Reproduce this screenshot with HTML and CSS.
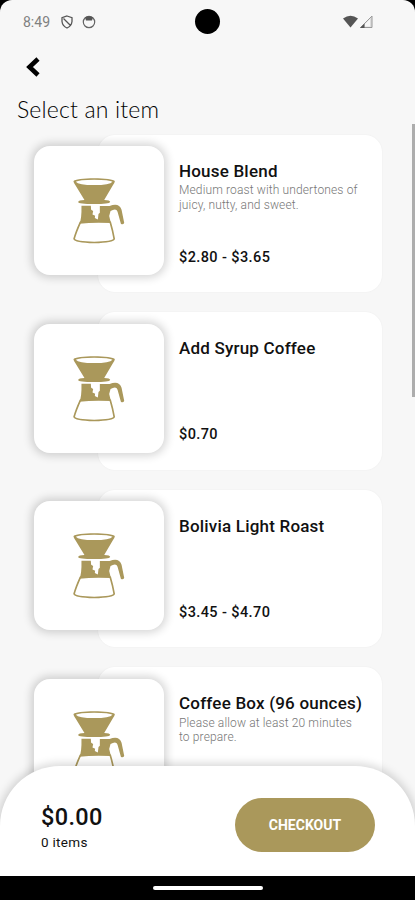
FILE: index.html
```html
<!DOCTYPE html>
<html lang="en">
<head>
<meta charset="utf-8">
<meta name="viewport" content="width=device-width">
<title>Select an item</title>
<link rel="stylesheet" href="styles.css">
</head>
<body>
<svg class="defs" width="0" height="0" aria-hidden="true">
  <symbol id="brewer" viewBox="36 36 158 202">
    <g fill="none" stroke="#aa985b" stroke-width="5" stroke-linecap="round" stroke-linejoin="round">
      <path d="M61 171Q47 202 42 221Q45 231 102 232Q159 231 162 221Q158 198 150 171"/>
    </g>
    <path fill="#aa985b" fill-rule="evenodd" d="M40 49C44 37 160 37 164 49Q163 55 158 61L132 105Q150 105 150 111Q148 117 102 117Q55 117 54 111Q55 105 73 105L46 61Q41 55 40 49ZM47 50Q55 60 102 60Q149 60 157 50Q148 44 102 44Q56 44 47 50Z"/>
    <path fill="#aa985b" d="M64 122H92L93 134L99 138L97 148L105 152L104 159L113 163L115 147L119 143V123L148 123Q176 111 184 134L192 174Q188 180 182 176L172 140Q168 128 151 138L147 153L152 174Q102 171 58 176Q65 160 64 122Z"/>
  </symbol>
</svg>
<div class="phone">
  <header class="status">
    <span class="time">8:49</span>
    <svg class="shield" viewBox="0 0 12 14"><path d="M6 1L11 2.7V6.5Q10.5 11 6 13Q1.500 11 1 6.500V2.700ZM2.500 3.500L9.500 10.500"/></svg>
    <svg class="badge" viewBox="0 0 14 14"><circle cx="7" cy="7" r="5.700"/><path d="M3 2.500L4 5.500H10L11 2.500Q7 0 3 2.500Z"/></svg>
    <span class="camera"></span>
    <svg class="signals" viewBox="0 0 31 14">
      <path fill="#555" d="M0 3.500Q7.500-2 15 3.500L7.500 12.500Z"/>
      <path fill="#ddd" d="M17 13L29 1V13Z"/><path fill="#f7f7f7" d="M22 11.500V9L27 4V11.500Z"/>
      <path fill="none" stroke="#999" d="M17.500 12.500L29 1V12.500Z"/><path fill="#555" d="M17 13L21.500 8.500V13Z"/>
    </svg>
  </header>
  <nav><svg class="back" viewBox="0 0 14 20"><path d="M12 2L3.500 10L12 18"/></svg></nav>
  <h1>Select an item</h1>
  <main>
    <article>
      <div class="tile"><svg><use href="#brewer"/></svg></div>
      <div class="info"><h2>House Blend</h2><p>Medium roast with undertones of<br>juicy, nutty, and sweet.</p><span class="price">$2.80 - $3.65</span></div>
    </article>
    <article>
      <div class="tile"><svg><use href="#brewer"/></svg></div>
      <div class="info"><h2>Add Syrup Coffee</h2><span class="price">$0.70</span></div>
    </article>
    <article>
      <div class="tile"><svg><use href="#brewer"/></svg></div>
      <div class="info"><h2>Bolivia Light Roast</h2><span class="price">$3.45 - $4.70</span></div>
    </article>
    <article>
      <div class="tile"><svg><use href="#brewer"/></svg></div>
      <div class="info"><h2>Coffee Box (96 ounces)</h2><p>Please allow at least 20 minutes<br>to prepare.</p></div>
    </article>
  </main>
  <span class="scrollbar"></span>
  <footer>
    <section class="cart">
      <div><strong>$0.00</strong><span class="count">0 items</span></div>
      <button>CHECKOUT</button>
    </section>
    <div class="gesture"><span></span></div>
  </footer>
</div>
</body>
</html>
```
FILE: styles.css
```css
* { box-sizing: border-box; }
body { margin: 0; background: #000; font-family: Roboto, sans-serif; color: #111; }
h1, h2, p { margin: 0; }
svg { display: block; }
.defs { position: absolute; }
.phone {
  position: relative;
  height: 900px;
  overflow: hidden;
  background: #f7f7f7;
  border-radius: 12px 12px 0 0;
}
.status { position: relative; display: flex; align-items: center; height: 43px; padding-left: 23px; }
.time { width: 38px; font-size: 14px; color: #808080; }
.shield { width: 12px; height: 14px; fill: none; stroke: #555; stroke-width: 1.300; }
.badge { width: 14px; height: 14px; margin-left: 9px; fill: none; stroke: #666; stroke-width: 1.200; }
.badge path { fill: #555; stroke: none; }
.camera { position: absolute; left: 195px; top: 9px; width: 25px; height: 25px; border-radius: 50%; background: #000; }
.signals { width: 31px; height: 14px; margin-left: auto; margin-right: 41px; }
nav { height: 51px; padding: 13.500px 0 0 26px; }
.back { width: 14px; height: 20px; fill: none; stroke: #000; stroke-width: 4.600; }
h1 { height: 40.500px; padding-left: 17px; font: 300 23px/30px Lato, sans-serif; letter-spacing: .18px; color: #000; white-space: nowrap; }
main { display: flex; flex-direction: column; gap: 20px; padding-left: 34px; }
article { display: flex; align-items: flex-start; height: 157.500px; }
.tile {
  position: relative;
  z-index: 1;
  flex: none;
  width: 129.500px;
  height: 129px;
  margin-top: 11.500px;
  padding: 31px 0 0 38px;
  border-radius: 16px;
  background: #fff;
  box-shadow: 0 0 8px 3px rgba(0, 0, 0, .16);
}
.tile svg { width: 53px; height: 67.500px; }
.info {
  display: flex;
  flex-direction: column;
  width: 284px;
  height: 100%;
  margin-left: -65.500px;
  padding: 26px 0 26.500px 81px;
  border-radius: 17px;
  background: #fff;
  box-shadow: 0 0 2px rgba(0, 0, 0, .05);
  white-space: nowrap;
}
h2 { font-size: 17px; line-height: 21px; font-weight: 500; letter-spacing: .2px; }
.info p { margin-top: 1.500px; font-size: 12px; line-height: 14.500px; font-weight: 300; color: #777; letter-spacing: .13px; }
.price { margin-top: auto; font-size: 14.500px; line-height: 17px; font-weight: 500; letter-spacing: .4px; }
.scrollbar { position: absolute; right: 0; top: 124px; width: 3.500px; height: 273px; background: #adadad; }
footer { position: absolute; left: 0; right: 0; bottom: 0; z-index: 2; }
.cart {
  display: flex;
  align-items: center;
  justify-content: space-between;
  height: 110px;
  padding: 8px 40px 0 41px;
  border-radius: 60px 60px 0 0;
  background: #fff;
  box-shadow: 0 0 9px 3px rgba(0, 0, 0, .15);
}
.cart > div { padding-top: 4px; }
strong { display: block; font-size: 23.500px; line-height: 29px; font-weight: 500; letter-spacing: .35px; }
.count { display: block; font-size: 13.500px; line-height: 20px; letter-spacing: .3px; }
button {
  width: 140px;
  height: 54px;
  padding: 0;
  border: 0;
  border-radius: 27px;
  background: #aa985b;
  color: #fff;
  font: 700 14px Roboto, sans-serif;
}
.gesture { display: flex; align-items: center; justify-content: center; height: 24px; background: #000; }
.gesture span { width: 110px; height: 4px; border-radius: 2px; background: #fff; }
```
